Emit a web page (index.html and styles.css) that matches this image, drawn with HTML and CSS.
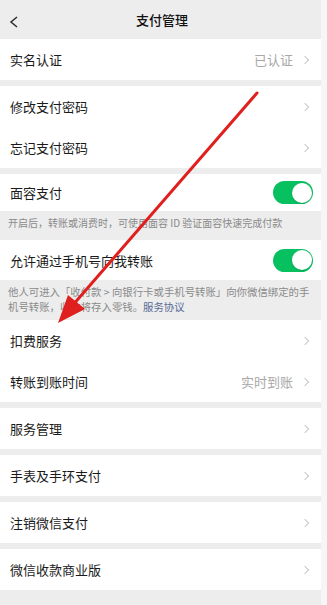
FILE: index.html
```html
<!DOCTYPE html>
<html lang="zh-CN">
<head>
  <meta charset="UTF-8">
  <meta name="viewport" content="width=device-width, initial-scale=1">
  <title>支付管理</title>
  <link rel="stylesheet" href="styles.css">
</head>
<body>

<div class="page">
  <!-- 顶部导航 -->
  <div class="nav">
    <svg class="nav-back" width="10" height="12" viewBox="0 0 10 12">
      <polyline points="8,1 2,6 8,11" fill="none" stroke="#2b2b2b" stroke-width="1.5"/>
    </svg>
    <span class="nav-title">支付管理</span>
  </div>

  <div class="group first">
    <div class="cell">
      <span class="label">实名认证</span>
      <span class="value">已认证</span>
      <i class="chevron"></i>
    </div>
  </div>

  <div class="group">
    <div class="cell">
      <span class="label">修改支付密码</span>
      <i class="chevron"></i>
    </div>
    <div class="cell">
      <span class="label">忘记支付密码</span>
      <i class="chevron"></i>
    </div>
  </div>

  <div class="group">
    <div class="cell cell-face">
      <span class="label">面容支付</span>
      <span class="switch on"></span>
    </div>
  </div>
  <p class="tip">开启后，转账或消费时，可使用面容 ID 验证面容快速完成付款</p>

  <div class="group">
    <div class="cell cell-phone">
      <span class="label">允许通过手机号向我转账</span>
      <span class="switch on"></span>
    </div>
  </div>
  <p class="tip tip-two">他人可进入「收付款 &gt; 向银行卡或手机号转账」向你微信绑定的手<br>机号转账，收款将存入零钱。<a class="link">服务协议</a></p>

  <div class="group">
    <div class="cell">
      <span class="label">扣费服务</span>
      <i class="chevron"></i>
    </div>
    <div class="cell">
      <span class="label">转账到账时间</span>
      <span class="value">实时到账</span>
      <i class="chevron"></i>
    </div>
  </div>

  <div class="group">
    <div class="cell">
      <span class="label">服务管理</span>
      <i class="chevron"></i>
    </div>
  </div>

  <div class="group">
    <div class="cell">
      <span class="label">手表及手环支付</span>
      <i class="chevron"></i>
    </div>
  </div>

  <div class="group">
    <div class="cell">
      <span class="label">注销微信支付</span>
      <i class="chevron"></i>
    </div>
  </div>

  <div class="group">
    <div class="cell">
      <span class="label">微信收款商业版</span>
      <i class="chevron"></i>
    </div>
  </div>
</div>

<!-- 标注箭头 -->
<svg class="mark" width="327" height="605" viewBox="0 0 327 605">
  <line x1="257" y1="93" x2="72" y2="306" stroke="#e0201f" stroke-width="3" stroke-linecap="round"/>
  <polygon points="58,323 68,295 85,309" fill="#e0201f"/>
</svg>

</body>
</html>
```

FILE: styles.css
```css
body {
  margin: 0;
  background: #f6f6f6;
  font-family: "Noto Sans CJK SC", "Noto Sans", sans-serif;
  color: #111;
}
.page {
  width: 321px;
  min-height: 605px;
  background: #ededed;
}
.nav {
  height: 39px;
  display: flex;
  align-items: center;
  justify-content: center;
  position: relative;
  background: #ededed;
}
.nav-back {
  position: absolute;
  left: 9px;
  top: 16px;
}
.nav-title {
  font-size: 13px;
  font-weight: 500;
  margin-left: 3px;
}
.group {
  background: #fff;
  margin-top: 6px;
}
.group.first {
  margin-top: 0;
}
.tip + .group {
  margin-top: 0;
}
.cell {
  height: 41px;
  display: flex;
  align-items: center;
  padding: 0 10px 0 10px;
}
.cell-face {
  height: 37px;
}
.cell-phone {
  height: 40px;
}
.label {
  flex: 1;
  font-size: 13px;
  color: #1a1a1a;
}
.value {
  font-size: 13px;
  color: #a8a8a8;
  margin-right: 9px;
}
.chevron {
  width: 5px;
  height: 5px;
  border-top: 1.5px solid #c8c8c8;
  border-right: 1.5px solid #c8c8c8;
  transform: rotate(45deg);
  margin-right: 3px;
}
.switch {
  width: 40px;
  height: 23px;
  border-radius: 12px;
  background: #d9d9d9;
  position: relative;
  margin-right: -2px;
}
.switch.on {
  background: #07c160;
}
.switch::after {
  content: "";
  position: absolute;
  top: 1.5px;
  right: 1.5px;
  width: 20px;
  height: 20px;
  border-radius: 50%;
  background: #fff;
  box-shadow: 0 1px 2px rgba(0, 0, 0, 0.15);
}
.tip {
  margin: 0;
  padding: 4px 8px 10px 8px;
  font-size: 10px;
  line-height: 15px;
  color: #8a8a8a;
  background: #ededed;
}
.tip-two {
  font-size: 10.4px;
  padding-bottom: 6px;
}
.link {
  color: #576b95;
}
.mark {
  position: absolute;
  top: 0;
  left: 0;
  pointer-events: none;
}
```
